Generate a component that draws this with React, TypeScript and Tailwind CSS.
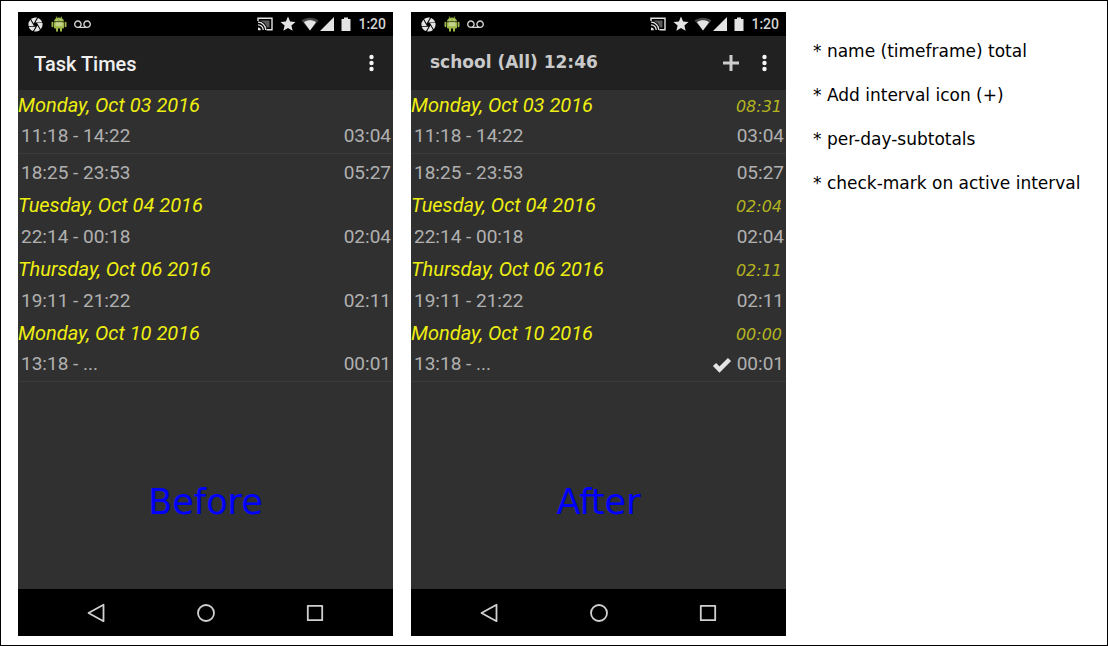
import { MdCamera, MdStar, MdVoicemail } from "react-icons/md";

type Interval = { span: string; total: string; active?: boolean };
type Day = { date: string; subtotal: string; intervals: Interval[] };

const days: Day[] = [
  {
    date: "Monday, Oct 03 2016",
    subtotal: "08:31",
    intervals: [
      { span: "11:18 - 14:22", total: "03:04" },
      { span: "18:25 - 23:53", total: "05:27" },
    ],
  },
  {
    date: "Tuesday, Oct 04 2016",
    subtotal: "02:04",
    intervals: [{ span: "22:14 - 00:18", total: "02:04" }],
  },
  {
    date: "Thursday, Oct 06 2016",
    subtotal: "02:11",
    intervals: [{ span: "19:11 - 21:22", total: "02:11" }],
  },
  {
    date: "Monday, Oct 10 2016",
    subtotal: "00:00",
    intervals: [{ span: "13:18 - ...", total: "00:01", active: true }],
  },
];

const notes = [
  "* name (timeframe) total",
  "* Add interval icon (+)",
  "* per-day-subtotals",
  "* check-mark on active interval",
];

function StatusBar() {
  return (
    <div className="flex h-6 items-center justify-between bg-black pr-[7px] pl-[9px] text-[#e4e4e4]">
      <div className="flex items-center gap-[7px]">
        <MdCamera className="size-[17px]" />
        <svg viewBox="0 0 16 16" className="size-4" fill="#9fb84a">
          <path d="M3 5.600C3.200 3.800 4.200 2.600 5.500 2L4.700 0.700l0.600-0.400 0.900 1.400a6 6 0 0 1 3.600 0L10.700 0.300l0.600 0.400L10.500 2c1.300 0.600 2.300 1.800 2.500 3.600z" />
          <path d="M3 6.200h10v5.300a1 1 0 0 1-1 1h-1v2.300a1 1 0 0 1-2 0v-2.300H7v2.300a1 1 0 0 1-2 0v-2.300H4a1 1 0 0 1-1-1z" />
          <rect x="0.500" y="5.800" width="1.900" height="5.500" rx="0.950" />
          <rect x="13.600" y="5.800" width="1.900" height="5.500" rx="0.950" />
          <path d="M4.500 6.200h7v4h-7z" fill="#c5d48c" />
          <circle cx="6" cy="3.900" r="0.500" fill="#f4f4f4" />
          <circle cx="10" cy="3.900" r="0.500" fill="#f4f4f4" />
        </svg>
        <MdVoicemail className="size-[17px] text-[#cfcfcf]" />
      </div>
      <div className="flex items-center">
        <svg viewBox="0 0 16 14" className="mr-1.5 h-3.5 w-4" fill="none" stroke="currentColor">
          <path d="M1 4V1.2h14v11.6H9.5" strokeWidth="1.4" />
          <path d="M3.500 3.500h9v7H10C9 7 7 5 3.500 4z" fill="currentColor" fillOpacity="0.400" stroke="none" />
          <path d="M1 5.200a7.800 7.800 0 0 1 7.800 7.800M1 7.800a5.200 5.200 0 0 1 5.200 5.200" strokeWidth="1.300" />
          <path d="M1 10.400A2.800 2.800 0 0 1 3.800 13.200H1z" fill="currentColor" stroke="none" />
        </svg>
        <MdStar className="mr-1 size-[18px]" />
        <svg viewBox="0 0 18 14" className="mr-px h-3.5 w-[18px]" fill="currentColor">
          <path d="M0.500 3.500C5.500-0.300 12.500-0.300 17.500 3.500L9 13.500z" fillOpacity="0.300" />
          <path d="M3 5.200C6.500 2.700 11.500 2.700 15 5.200L9 13.500z" />
        </svg>
        <svg viewBox="0 0 14 14" className="mr-[7px] size-3.5" fill="currentColor">
          <path d="M14 0v14H0z" />
        </svg>
        <svg viewBox="0 0 10 14" className="mr-[7px] h-3.5 w-2.5" fill="currentColor">
          <path d="M3 0.500h4v1.500h2.500v12h-9V2H3z" />
        </svg>
        <span className="text-sm font-medium text-[#d4d4d4]">1:20</span>
      </div>
    </div>
  );
}

function AppBar({ detailed }: { detailed: boolean }) {
  return (
    <header className="flex h-[54px] items-center justify-between bg-[#212121] pr-[13px] pl-4">
      {detailed ? (
        <h1 className="pl-[3px] font-['DejaVu_Sans',sans-serif] text-[17px] font-bold text-[#cacaca]">
          school (All) 12:46
        </h1>
      ) : (
        <h1 className="pt-0.5 text-xl font-medium text-[#f0f0f0]">Task Times</h1>
      )}
      <div className="flex items-center gap-[18px]">
        {detailed && (
          <button type="button" aria-label="Add interval">
            <svg viewBox="0 0 16 16" className="size-4" stroke="#cccccc" strokeWidth="3">
              <path d="M8 0v16M0 8h16" />
            </svg>
          </button>
        )}
        <button type="button" aria-label="More options">
          <svg viewBox="0 0 16 18" className="h-[18px] w-4" fill="#f5f5f5">
            <circle cx="7.500" cy="3" r="2.200" />
            <circle cx="7.500" cy="9" r="2.200" />
            <circle cx="7.500" cy="15" r="2.200" />
          </svg>
        </button>
      </div>
    </header>
  );
}

function DaySection({ day, detailed }: { day: Day; detailed: boolean }) {
  return (
    <section>
      <div className="flex h-7 items-center justify-between pt-px pr-1">
        <h2 className="text-xl text-[#eeee11] italic">{day.date}</h2>
        {detailed && (
          <span className="pt-1 font-['DejaVu_Sans',sans-serif] text-base text-[#b4b420] italic">
            {day.subtotal}
          </span>
        )}
      </div>
      <ul className="divide-y divide-[#3b3b3b]">
        {day.intervals.map((interval) => (
          <li
            key={interval.span}
            className="flex h-9 items-center justify-between pt-0.5 pr-0.5 pl-[3px] text-[19px] text-[#b0b0b0]"
          >
            <span>{interval.span}</span>
            <span className="flex items-center gap-[5px]">
              {detailed && interval.active && (
                <svg viewBox="0 0 20 16" className="h-4 w-5" role="img" aria-label="Active">
                  <path d="M2.500 7.500l5 5L17.500 2.500" fill="none" stroke="#e4e4e4" strokeWidth="4.500" />
                </svg>
              )}
              {interval.total}
            </span>
          </li>
        ))}
      </ul>
    </section>
  );
}

function NavBar() {
  return (
    <nav className="flex h-[47px] bg-black px-6 text-[#d0d0d0]">
      <button type="button" aria-label="Back" className="flex flex-1 items-center justify-center">
        <svg viewBox="0 0 20 20" className="size-5" fill="none" stroke="currentColor" strokeWidth="1.800" strokeLinejoin="round">
          <path d="M16.500 1.800v16.400L1.500 10z" />
        </svg>
      </button>
      <button type="button" aria-label="Home" className="flex flex-1 items-center justify-center">
        <svg viewBox="0 0 20 20" className="size-5" fill="none" stroke="currentColor" strokeWidth="1.800">
          <circle cx="10" cy="10" r="8" />
        </svg>
      </button>
      <button type="button" aria-label="Recent apps" className="flex flex-1 items-center justify-center">
        <svg viewBox="0 0 20 20" className="size-5" fill="none" stroke="currentColor" strokeWidth="1.800" strokeLinejoin="round">
          <path d="M2.800 2.800h14.400v14.400H2.800z" />
        </svg>
      </button>
    </nav>
  );
}

function Phone({ caption, detailed = false }: { caption: string; detailed?: boolean }) {
  return (
    <article className="flex flex-col bg-[#303030] font-[Roboto,sans-serif]">
      <StatusBar />
      <AppBar detailed={detailed} />
      <div className="flex-1">
        <div className="border-[#3b3b3b] [&>section:last-child_li:last-child]:border-b [&>section:last-child_li:last-child]:border-[#3b3b3b]">
          {days.map((day) => (
            <DaySection key={day.date} day={day} detailed={detailed} />
          ))}
        </div>
        <p className="pt-24 text-center font-['DejaVu_Sans',sans-serif] text-[35px] leading-[48px] text-[#0000ff]">
          {caption}
        </p>
      </div>
      <NavBar />
    </article>
  );
}

export default function App() {
  return (
    <main className="grid min-h-screen grid-cols-[375fr_375fr_303fr] gap-[18px] border border-black bg-white pt-[11px] pb-[9px] pl-[17px]">
      <Phone caption="Before" />
      <Phone caption="After" detailed />
      <ul className="space-y-5 pt-[27px] pl-[9px] font-['DejaVu_Sans',sans-serif] text-[17px] leading-6 text-black">
        {notes.map((note) => (
          <li key={note}>{note}</li>
        ))}
      </ul>
    </main>
  );
}
